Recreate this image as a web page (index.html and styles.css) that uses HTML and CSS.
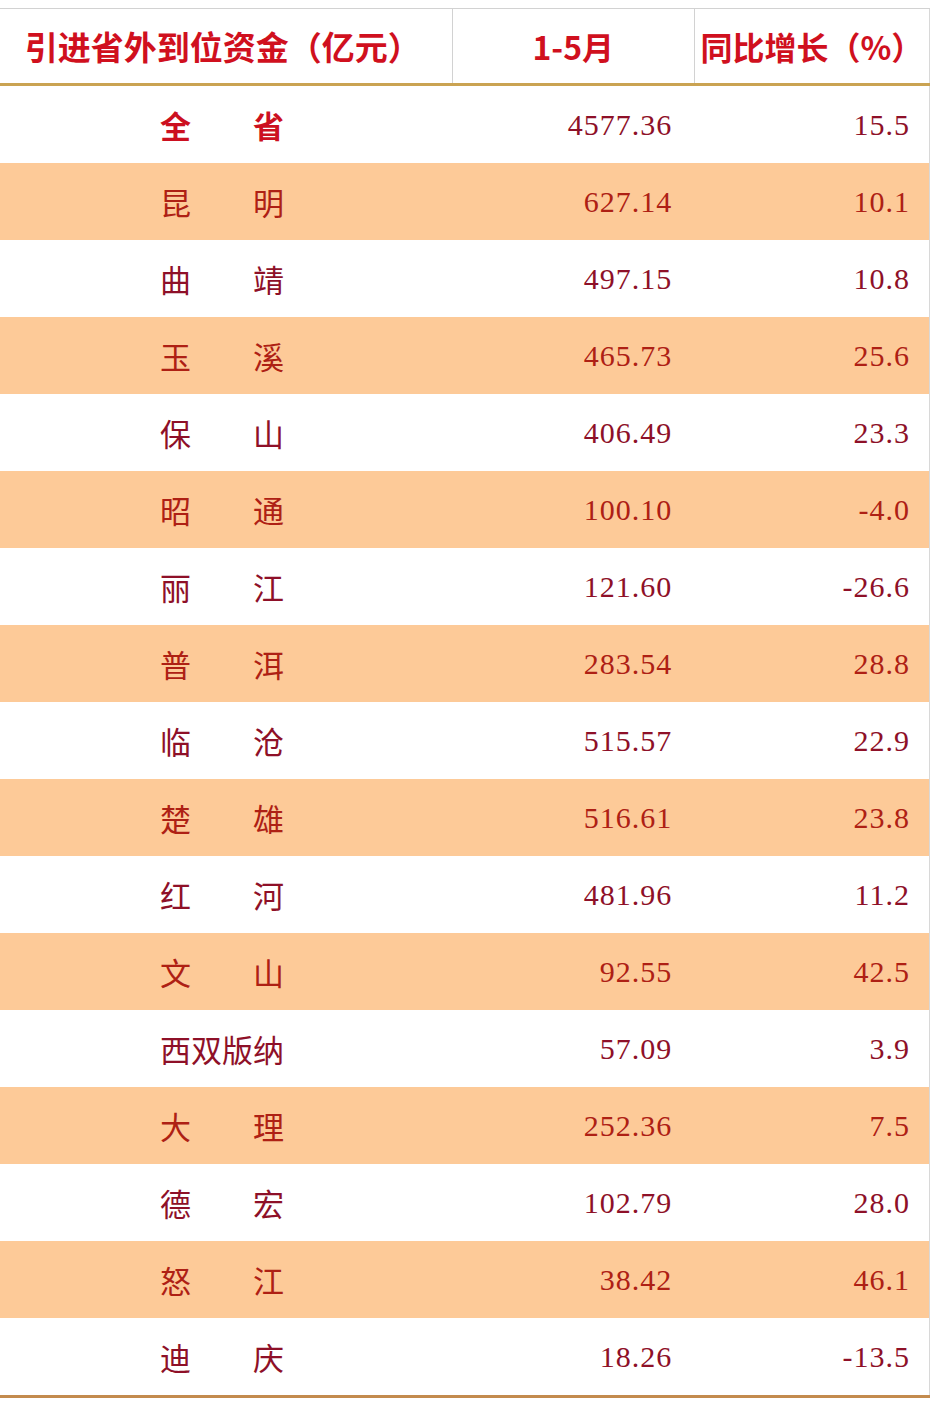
FILE: index.html
```html
<!DOCTYPE html>
<html lang="zh-CN">
<head>
<meta charset="utf-8">
<title>引进省外到位资金</title>
<link rel="stylesheet" href="styles.css">
</head>
<body>
<table class="data">
  <colgroup>
    <col class="c-name">
    <col class="c-val">
    <col class="c-pct">
  </colgroup>
  <thead>
    <tr>
      <th class="name">引进省外到位资金（亿元）</th>
      <th class="val-h">1-5月</th>
      <th class="pct-h">同比增长（%）</th>
    </tr>
  </thead>
  <tbody>
    <tr class="total"><td class="name">全　　省</td><td class="num">4577.36</td><td class="num pct">15.5</td></tr>
    <tr class="alt"><td class="name">昆　　明</td><td class="num">627.14</td><td class="num pct">10.1</td></tr>
    <tr><td class="name">曲　　靖</td><td class="num">497.15</td><td class="num pct">10.8</td></tr>
    <tr class="alt"><td class="name">玉　　溪</td><td class="num">465.73</td><td class="num pct">25.6</td></tr>
    <tr><td class="name">保　　山</td><td class="num">406.49</td><td class="num pct">23.3</td></tr>
    <tr class="alt"><td class="name">昭　　通</td><td class="num">100.10</td><td class="num pct">-4.0</td></tr>
    <tr><td class="name">丽　　江</td><td class="num">121.60</td><td class="num pct">-26.6</td></tr>
    <tr class="alt"><td class="name">普　　洱</td><td class="num">283.54</td><td class="num pct">28.8</td></tr>
    <tr><td class="name">临　　沧</td><td class="num">515.57</td><td class="num pct">22.9</td></tr>
    <tr class="alt"><td class="name">楚　　雄</td><td class="num">516.61</td><td class="num pct">23.8</td></tr>
    <tr><td class="name">红　　河</td><td class="num">481.96</td><td class="num pct">11.2</td></tr>
    <tr class="alt"><td class="name">文　　山</td><td class="num">92.55</td><td class="num pct">42.5</td></tr>
    <tr><td class="name">西双版纳</td><td class="num">57.09</td><td class="num pct">3.9</td></tr>
    <tr class="alt"><td class="name">大　　理</td><td class="num">252.36</td><td class="num pct">7.5</td></tr>
    <tr><td class="name">德　　宏</td><td class="num">102.79</td><td class="num pct">28.0</td></tr>
    <tr class="alt"><td class="name">怒　　江</td><td class="num">38.42</td><td class="num pct">46.1</td></tr>
    <tr class="last"><td class="name">迪　　庆</td><td class="num">18.26</td><td class="num pct">-13.5</td></tr>
  </tbody>
</table>
</body>
</html>
```

FILE: styles.css
```css
html, body {
  margin: 0;
  padding: 0;
  background: #ffffff;
}

body {
  width: 940px;
  font-family: "Noto Sans CJK SC", "Noto Sans", sans-serif;
}

.data {
  margin-top: 8px;
  width: 930px;
  border-collapse: collapse;
  table-layout: fixed;
  border-right: 1px solid #d8d8d8;
}

.c-name { width: 452px; }
.c-val { width: 242px; }
.c-pct { width: 235px; }

.data th {
  height: 74px;
  padding: 0;
  border-top: 1px solid #d2d2d2;
  border-bottom: 3px solid #caa352;
  font-size: 32px;
  font-weight: 700;
  color: #d0101e;
  text-align: center;
  vertical-align: middle;
  line-height: 1;
}

.data th.name {
  font-size: 33px;
  padding-right: 6px;
}

.data th.val-h,
.data th.pct-h {
  border-left: 1px solid #d2d2d2;
}

.data td {
  height: 77px;
  padding: 0;
  vertical-align: middle;
  line-height: 1;
  color: #8e1028;
}

.data td.name {
  font-size: 31px;
  text-align: center;
  padding-right: 8px;
}

.data td.num {
  font-family: "Liberation Serif", "DejaVu Serif", serif;
  font-size: 30px;
  letter-spacing: 1px;
  text-align: right;
  padding-right: 22px;
}

.data td.num.pct {
  padding-right: 19px;
}

.data tr.alt td {
  background: #fdca98;
  color: #ae2014;
}

.data tr.total td.name {
  font-weight: 700;
  color: #cc1020;
}

.data tr.last td {
  border-bottom: 3px solid #c38b4e;
}
```
